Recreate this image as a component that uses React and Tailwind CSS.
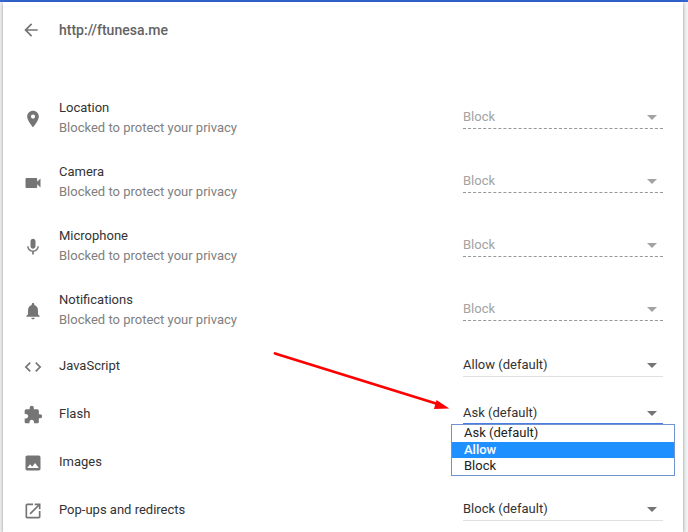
import React from "react";

const ICONS = {
  back: "M20 11H7.83l5.59-5.59L12 4l-8 8 8 8 1.41-1.41L7.83 13H20v-2z",
  location:
    "M12 2C8.13 2 5 5.13 5 9c0 5.25 7 13 7 13s7-7.75 7-13c0-3.87-3.13-7-7-7zm0 9.5c-1.38 0-2.5-1.12-2.5-2.5s1.12-2.5 2.5-2.5 2.5 1.12 2.5 2.5-1.12 2.5-2.5 2.5z",
  camera:
    "M17 10.5V7c0-.55-.45-1-1-1H4c-.55 0-1 .45-1 1v10c0 .55.45 1 1 1h12c.55 0 1-.45 1-1v-3.5l4 4v-11l-4 4z",
  mic: "M12 14c1.66 0 2.99-1.34 2.99-3L15 5c0-1.66-1.34-3-3-3S9 3.34 9 5v6c0 1.66 1.34 3 3 3zm5.3-3c0 3-2.54 5.1-5.3 5.1S6.7 14 6.7 11H5c0 3.41 2.72 6.23 6 6.72V21h2v-3.28c3.28-.48 6-3.3 6-6.72h-1.7z",
  bell: "M12 22c1.1 0 2-.9 2-2h-4c0 1.1.89 2 2 2zm6-6v-5c0-3.07-1.64-5.64-4.5-6.32V4c0-.83-.67-1.5-1.5-1.5s-1.5.67-1.5 1.5v.68C7.63 5.36 6 7.92 6 11v5l-2 2v1h16v-1l-2-2z",
  code: "M9.4 16.6L4.8 12l4.6-4.6L8 6l-6 6 6 6 1.4-1.4zm5.2 0l4.6-4.6-4.6-4.6L16 6l6 6-6 6-1.4-1.4z",
  extension:
    "M20.5 11H19V7c0-1.1-.9-2-2-2h-4V3.5C13 2.12 11.88 1 10.5 1S8 2.12 8 3.5V5H4c-1.1 0-1.99.9-1.99 2v3.8H3.5c1.49 0 2.7 1.21 2.7 2.7s-1.21 2.7-2.7 2.7H2V20c0 1.1.9 2 2 2h3.8v-1.5c0-1.49 1.21-2.7 2.7-2.7 1.49 0 2.7 1.21 2.7 2.7V22H17c1.1 0 2-.9 2-2v-4h1.5c1.38 0 2.5-1.12 2.5-2.5S21.88 11 20.5 11z",
  image:
    "M21 19V5c0-1.1-.9-2-2-2H5c-1.1 0-2 .9-2 2v14c0 1.1.9 2 2 2h14c1.1 0 2-.9 2-2zM8.5 13.5l2.5 3.01L14.5 12l4.5 6H5l3.5-4.5z",
  launch:
    "M19 19H5V5h7V3H5c-1.11 0-2 .9-2 2v14c0 1.1.89 2 2 2h14c1.1 0 2-.9 2-2v-7h-2v7zM14 3v2h3.59l-9.83 9.83 1.41 1.41L19 6.41V10h2V3h-7z",
};

function Icon({ name }) {
  return (
    <svg viewBox="0 0 24 24" className="block size-5 shrink-0 fill-[#757575]">
      <path d={ICONS[name]} />
    </svg>
  );
}

function Caret() {
  return (
    <svg viewBox="0 0 10 5" className="mr-1.5 mt-0.5 block h-[5px] w-2.5 fill-current">
      <path d="M0 0h10L5 5z" />
    </svg>
  );
}

const UNDERLINES = {
  disabled: "border-b border-dashed border-[#989898] text-[#a3a3a3]",
  normal: "border-b border-[#e0e0e0] text-[#333]",
  focused: "border-b-2 border-[#4a7de0] pt-px text-[#333]",
};

function Select({ value, state = "normal" }) {
  return (
    <div className={`flex h-6 w-[200px] items-center justify-between ${UNDERLINES[state]}`}>
      <span>{value}</span>
      <span className={state === "disabled" ? "text-[#a3a3a3]" : "text-[#757575]"}>
        <Caret />
      </span>
    </div>
  );
}

function Menu() {
  return (
    <ul className="absolute -left-3 top-[23px] z-10 w-56 border border-[#7092cf] bg-white pb-px text-[#222]">
      <li className="h-[17px] px-3 leading-4">Ask (default)</li>
      <li className="h-4 bg-[#1e90ff] px-3 font-medium leading-4 text-white">Allow</li>
      <li className="h-4 px-3 leading-4">Block</li>
    </ul>
  );
}

const ROWS = [
  { icon: "location", label: "Location", blocked: true, value: "Block" },
  { icon: "camera", label: "Camera", blocked: true, value: "Block" },
  { icon: "mic", label: "Microphone", blocked: true, value: "Block" },
  { icon: "bell", label: "Notifications", blocked: true, value: "Block" },
  { icon: "code", label: "JavaScript", value: "Allow (default)" },
  { icon: "extension", label: "Flash", value: "Ask (default)", open: true },
  { icon: "image", label: "Images", value: null },
  { icon: "launch", label: "Pop-ups and redirects", value: "Block (default)" },
];

function Row({ icon, label, blocked, value, open }) {
  return (
    <div className={`flex items-center px-5 ${blocked ? "h-16" : "h-12"}`}>
      <div className="pt-0.5">
        <Icon name={icon} />
      </div>
      <div className="ml-4 flex-1 leading-5">
        <div className="text-[#333]">{label}</div>
        {blocked && <div className="text-[#808080]">Blocked to protect your privacy</div>}
      </div>
      {value && (
        <div className="relative mb-0.5">
          <Select value={value} state={blocked ? "disabled" : open ? "focused" : "normal"} />
          {open && <Menu />}
        </div>
      )}
    </div>
  );
}

export default function App() {
  return (
    <div className="relative h-[532px] w-[688px] overflow-hidden bg-[#f3f4f5] font-[Roboto,sans-serif] text-[13px]">
      <div className="h-0.5 bg-[#3367d6]" />
      <main className="ml-[3px] mr-[5px] h-[530px] bg-white shadow-[0_1px_4px_rgba(0,0,0,0.4)]">
        <header className="flex h-14 items-center pl-[18px]">
          <Icon name="back" />
          <h1 className="ml-[18px] text-sm font-medium text-[#636363]">http://ftunesa.me</h1>
        </header>
        <section className="pt-7">
          {ROWS.map((row) => (
            <Row key={row.label} {...row} />
          ))}
        </section>
      </main>
      <svg viewBox="0 0 180 62" className="absolute left-[270px] top-[350px] z-20 h-[62px] w-[180px]">
        <path d="M5 3.5L166 53.5" stroke="#f00" strokeWidth="2.8" strokeLinecap="round" />
        <path d="M166.5 50L179.3 58.5L164 59z" fill="#f00" />
      </svg>
    </div>
  );
}
